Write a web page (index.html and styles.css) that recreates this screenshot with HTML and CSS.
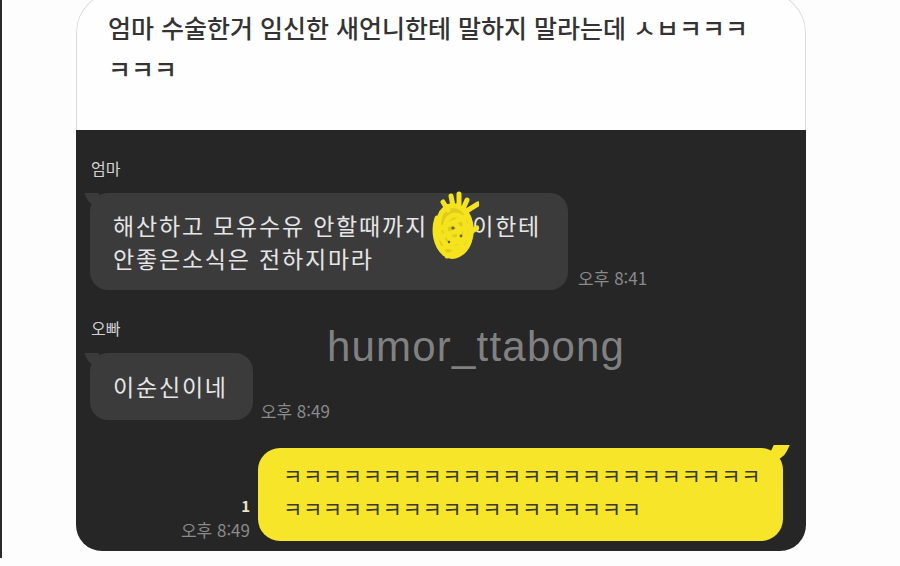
FILE: index.html
```html
<!DOCTYPE html>
<html lang="ko">
<head>
<meta charset="utf-8">
<link rel="stylesheet" href="styles.css">
</head>
<body>
<div class="page">
  <div class="card">
    <div class="header">
      <p class="title">엄마 수술한거 임신한 새언니한테 말하지 말라는데 ㅅㅂㅋㅋㅋ<br>ㅋㅋㅋ</p>
    </div>
    <div class="chat">
      <div class="name name-first">엄마</div>
      <div class="row row-first">
        <div class="bubble recv">해산하고 모유수유 안할때까지 <span class="blur"><svg class="scribble" viewBox="0 0 48 70" width="48" height="72"><path d="M14 14 C4 24 2 44 10 58 C18 68 34 66 40 52 C46 38 42 20 30 14 C22 10 16 12 14 14 Z" fill="#f1dc1a" opacity="0.9"/><path d="M20 4 L22 14 M28 2 L28 12 M12 10 L17 18 M36 8 L32 17 M6 26 C2 38 4 54 14 62 C22 68 34 62 38 50 C42 38 40 22 30 16 C20 10 10 16 8 28 C6 40 12 54 22 56 C32 58 36 44 34 32 C32 22 22 20 16 28 C12 36 16 48 24 48 C30 48 30 36 24 32 M10 36 L36 24 M8 46 L38 34 M12 56 L38 44 M16 64 L34 56 M34 20 L47 12 M40 40 L46 36" fill="none" stroke="#f5e31e" stroke-width="5" stroke-linecap="round" stroke-linejoin="round"/><circle cx="22" cy="36" r="1.6" fill="#6a6224"/><circle cx="30" cy="44" r="1.4" fill="#6a6224"/><circle cx="18" cy="50" r="1.2" fill="#6a6224"/></svg></span>이한테<br>안좋은소식은 전하지마라</div>
        <div class="time time-first">오후 8:41</div>
      </div>
      <div class="name name-second">오빠</div>
      <div class="row">
        <div class="bubble recv short">이순신이네</div>
        <div class="time time-second">오후 8:49</div>
      </div>
      <div class="row sent-row">
        <div class="meta">
          <span class="unread">1</span>
          <span class="time">오후 8:49</span>
        </div>
        <div class="bubble sent">ㅋㅋㅋㅋㅋㅋㅋㅋㅋㅋㅋㅋㅋㅋㅋㅋㅋㅋㅋㅋㅋㅋㅋㅋ<br>ㅋㅋㅋㅋㅋㅋㅋㅋㅋㅋㅋㅋㅋㅋㅋㅋㅋㅋ</div>
      </div>
      <div class="watermark">humor_ttabong</div>
    </div>
  </div>
</div>
</body>
</html>
```

FILE: styles.css
```css
html, body {
  margin: 0;
  padding: 0;
  background: #fdfdfd;
}
body {
  width: 900px;
  height: 566px;
  overflow: hidden;
  font-family: "Noto Sans CJK KR", "Noto Sans", sans-serif;
}
.page {
  height: 566px;
  border-left: 2px solid #2b2b2b;
  padding-left: 74px;
  box-sizing: border-box;
}
.card {
  width: 730px;
  margin-top: -8px;
  border-radius: 40px 40px 26px 26px;
  overflow: hidden;
  position: relative;
}
.header {
  height: 138px;
  background: #fefefe;
  border: 1px solid #dadada;
  border-bottom: none;
  border-radius: 40px 40px 0 0;
  box-sizing: border-box;
  padding: 14px 0 0 31px;
}
.title {
  margin: 0;
  font-size: 25px;
  font-weight: 500;
  line-height: 41px;
  color: #333333;
  letter-spacing: 0;
}
.chat {
  background: #262626;
  height: 421px;
  box-sizing: border-box;
  padding: 28px 0 0 14px;
  position: relative;
}
.name {
  font-size: 16px;
  color: #d2d2d2;
  line-height: 20px;
  padding-left: 1px;
}
.name-second {
  margin-top: 28px;
}
.row {
  display: flex;
  align-items: flex-end;
  margin-top: 15px;
}
.bubble {
  line-height: 33px;
  position: relative;
}
.recv {
  font-size: 23px;
  background: #3b3b3b;
  color: #e6e6e6;
  border-radius: 18px;
  padding: 16px 27px 15px 23px;
  letter-spacing: 1.8px;
}
.recv::before {
  content: "";
  position: absolute;
  left: -3px;
  top: 0;
  width: 14px;
  height: 14px;
  background: #3b3b3b;
  border-radius: 0 0 0 10px;
  transform: skewX(20deg);
}
.short {
  padding: 17px 25px 17px 23px;
}
.blur {
  display: inline-block;
  width: 36px;
  height: 20px;
  position: relative;
}
.scribble {
  position: absolute;
  left: -5px;
  top: -24px;
}
.time {
  font-size: 17px;
  color: #8a8a8a;
  line-height: 18px;
  padding: 0 0 0 8px;
}
.time-first {
  padding: 0 0 3px 10px;
}
.time-second {
  padding-bottom: 0;
}
.sent-row {
  justify-content: flex-end;
  margin-top: 28px;
  padding-right: 23px;
}
.meta {
  display: flex;
  flex-direction: column;
  align-items: flex-end;
  gap: 6px;
  padding-right: 8px;
  padding-bottom: 2px;
}
.meta .time {
  padding: 0;
}
.unread {
  font-size: 15px;
  font-weight: bold;
  color: #ebe6c8;
  line-height: 18px;
}
.sent {
  background: #f7e52a;
  color: #3a3a2a;
  width: 525px;
  box-sizing: border-box;
  border-radius: 22px;
  padding: 11px 10px 16px 25px;
  font-size: 21px;
  letter-spacing: 0.6px;
}
.sent::after {
  content: "";
  position: absolute;
  right: -3px;
  top: -3px;
  width: 16px;
  height: 16px;
  background: #f7e52a;
  border-radius: 0 0 10px 0;
  transform: skewX(-25deg);
}
.watermark {
  position: absolute;
  left: 251px;
  top: 193px;
  font-family: "Liberation Sans", Arial, sans-serif;
  font-size: 42px;
  color: rgba(160, 160, 160, 0.75);
  letter-spacing: 1.2px;
}
```
